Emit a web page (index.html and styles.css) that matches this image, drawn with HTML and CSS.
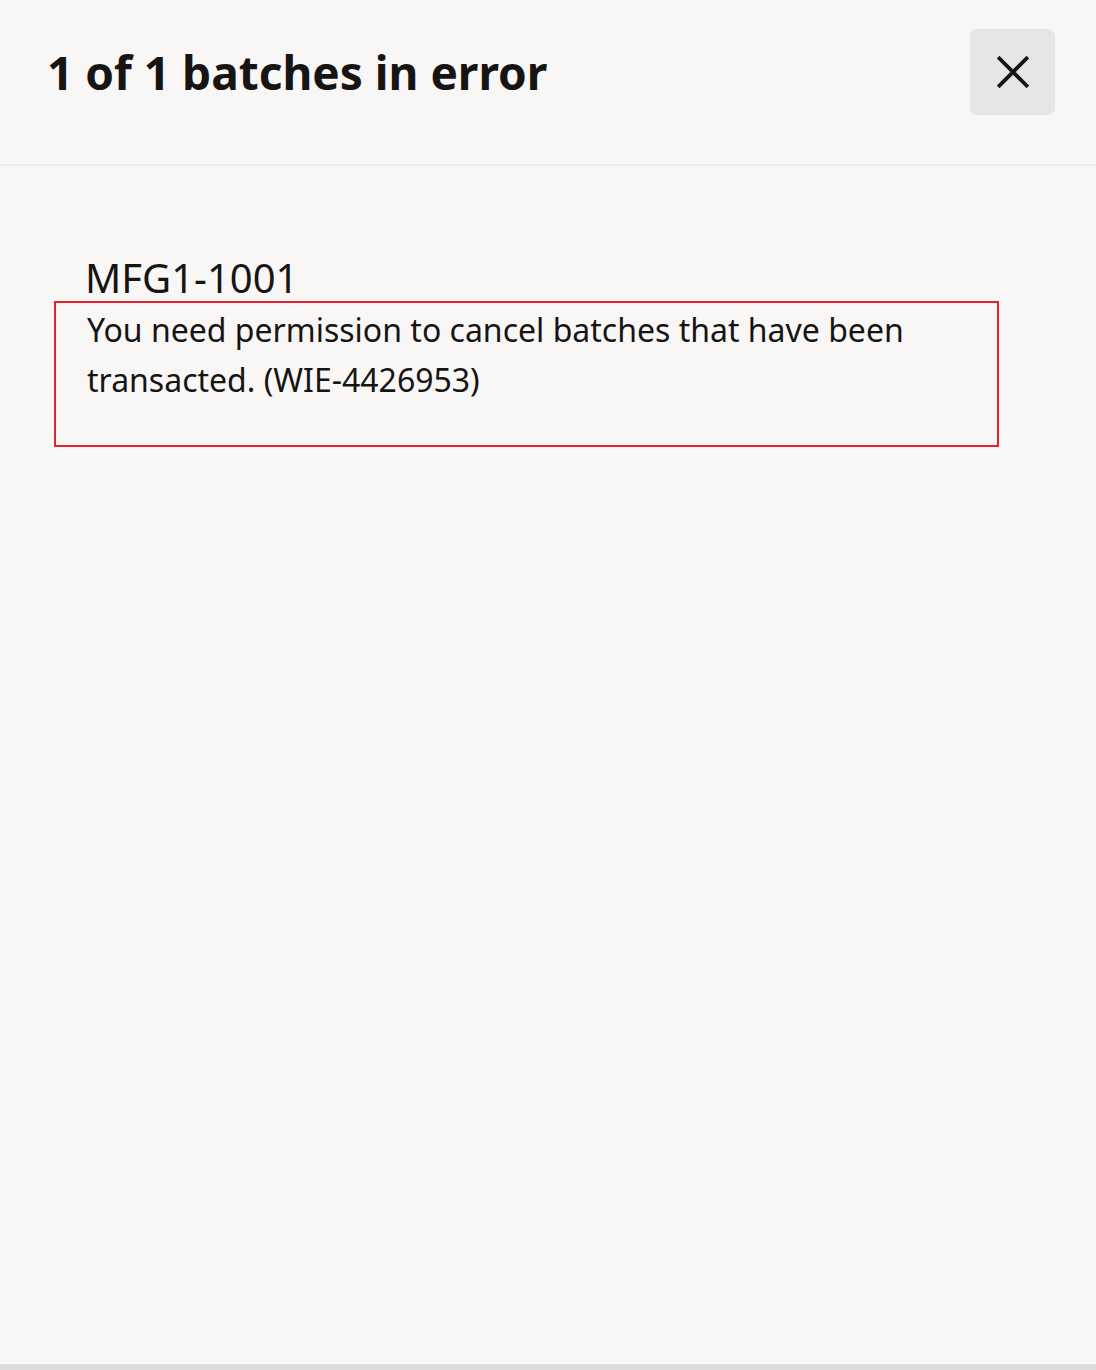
FILE: index.html
```html
<!DOCTYPE html>
<html lang="en">
<head>
<meta charset="utf-8">
<title>Batches in error</title>
<link rel="stylesheet" href="styles.css">
</head>
<body>
<div class="page">
  <header class="header">
    <h1 class="title">1 of 1 batches in error</h1>
    <button class="close" aria-label="Close">
      <svg width="34" height="34" viewBox="0 0 34 34" aria-hidden="true">
        <path d="M3.5 3.5 L30.5 30.5 M30.5 3.5 L3.5 30.5" stroke="#161513" stroke-width="3.8" stroke-linecap="square" fill="none"/>
      </svg>
    </button>
  </header>
  <main class="content">
    <div class="batch-id">MFG1-1001</div>
    <div class="error-box">
      <p class="error-text">You need permission to cancel batches that have been transacted. (WIE-4426953)</p>
    </div>
  </main>
  <div class="footer-strip"></div>
</div>
</body>
</html>
```
FILE: styles.css
```css
html, body {
  margin: 0;
  padding: 0;
  background: #f9f7f6;
}
body {
  font-family: "Noto Sans", "Open Sans", sans-serif;
  color: #161513;
}
.page {
  height: 1370px;
  display: flex;
  flex-direction: column;
  background: #f9f7f6;
}
.header {
  box-sizing: border-box;
  height: 166px;
  padding: 29px 41px 0 47px;
  display: flex;
  justify-content: space-between;
  align-items: flex-start;
  border-bottom: 2px solid #eeecea;
}
.title {
  margin: 0;
  font-size: 46px;
  font-weight: 700;
  line-height: 86px;
  letter-spacing: 0;
}
.close {
  width: 85px;
  height: 86px;
  border: none;
  border-radius: 7px;
  background: #e8e6e4;
  display: flex;
  align-items: center;
  justify-content: center;
  padding: 0;
}
.close svg { display: block; }
.content {
  flex: 1;
  padding: 89px 97px 0 54px;
}
.batch-id {
  font-size: 40px;
  line-height: 46px;
  padding-left: 31px;
}
.error-box {
  border: 2px solid #e3242f;
  padding: 2px 20px 40px 31px;
}
.error-text {
  margin: 0;
  font-size: 32px;
  line-height: 50px;
}
.footer-strip {
  height: 6px;
  background: #dcdcdc;
  border-top: 1px solid #ffffff;
}
```
